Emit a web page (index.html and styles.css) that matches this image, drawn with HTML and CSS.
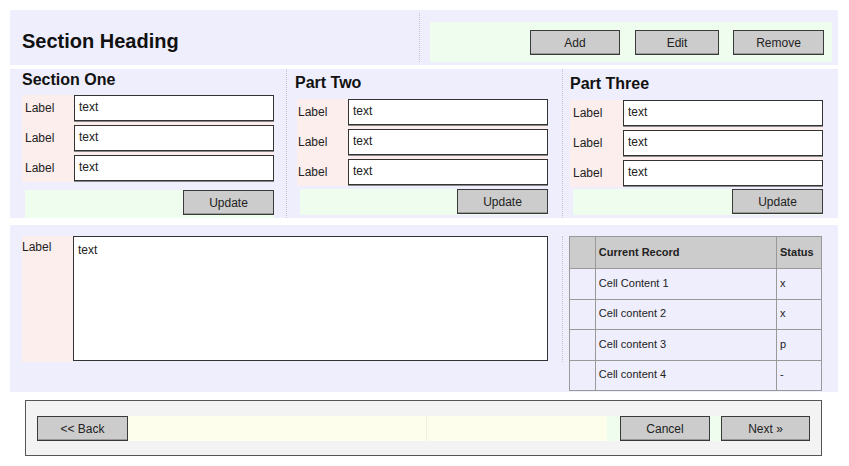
FILE: index.html
```html
<!DOCTYPE html>
<html>
<head>
<meta charset="utf-8">
<link rel="stylesheet" href="styles.css">
</head>
<body>
<div class="page">
  <div class="band top">
    <div class="top-left"><h1>Section Heading</h1></div>
    <div class="top-right">
      <div class="actions">
        <button class="btn btn-add">Add</button>
        <button class="btn btn-edit">Edit</button>
        <button class="btn">Remove</button>
      </div>
    </div>
  </div>

  <div class="band parts">
    <div class="part p1">
      <h2>Section One</h2>
      <div class="form">
        <div class="row"><span class="lbl">Label</span><span class="inp">text</span></div>
        <div class="row"><span class="lbl">Label</span><span class="inp">text</span></div>
        <div class="row"><span class="lbl">Label</span><span class="inp">text</span></div>
      </div>
      <div class="bar"><button class="btn">Update</button></div>
    </div>
    <div class="part p2">
      <h2>Part Two</h2>
      <div class="form">
        <div class="row"><span class="lbl">Label</span><span class="inp">text</span></div>
        <div class="row"><span class="lbl">Label</span><span class="inp">text</span></div>
        <div class="row"><span class="lbl">Label</span><span class="inp">text</span></div>
      </div>
      <div class="bar"><button class="btn">Update</button></div>
    </div>
    <div class="part p3">
      <h2>Part Three</h2>
      <div class="form">
        <div class="row"><span class="lbl">Label</span><span class="inp">text</span></div>
        <div class="row"><span class="lbl">Label</span><span class="inp">text</span></div>
        <div class="row"><span class="lbl">Label</span><span class="inp">text</span></div>
      </div>
      <div class="bar"><button class="btn">Update</button></div>
    </div>
  </div>

  <div class="band detail">
    <div class="memo">
      <span class="memo-lbl">Label</span>
      <div class="memo-box">text</div>
    </div>
    <div class="records">
      <table class="grid">
        <thead>
          <tr><th class="c0"></th><th class="c1">Current Record</th><th class="c2">Status</th></tr>
        </thead>
        <tbody>
          <tr><td></td><td>Cell Content 1</td><td>x</td></tr>
          <tr><td></td><td>Cell content 2</td><td>x</td></tr>
          <tr><td></td><td>Cell content 3</td><td>p</td></tr>
          <tr><td></td><td>Cell content 4</td><td>-</td></tr>
        </tbody>
      </table>
    </div>
  </div>

  <div class="footer">
    <button class="btn">&lt;&lt; Back</button>
    <div class="spacer"><div class="half first"></div><div class="half"></div></div>
    <div class="nav">
      <button class="btn">Cancel</button>
      <button class="btn btn-next">Next &raquo;</button>
    </div>
  </div>
</div>
</body>
</html>
```

FILE: styles.css
```css
* { box-sizing: border-box; }
body {
  margin: 0;
  background: #fff;
  font-family: "Liberation Sans", Arial, sans-serif;
  color: #222;
}
.page {
  padding: 10px 11px 0 10px;
  width: 849px;
}
.band {
  background: #eeeefc;
  display: flex;
}
.top {
  height: 55px;
  margin-bottom: 4px;
}
.top-left {
  width: 410px;
  display: flex;
  align-items: center;
  padding-left: 12px;
  border-right: 1px dotted #c4c4d4;
  margin: 3px 0;
}
h1 {
  margin: 0;
  font-size: 20px;
  font-weight: bold;
  color: #111;
  padding-top: 8px;
}
.top-right {
  flex: 1;
  padding: 12px 6px 3px 10px;
}
.actions {
  background: #effdef;
  height: 40px;
  display: flex;
  justify-content: flex-end;
  align-items: flex-start;
  padding: 8px 8px 0 0;
}
.actions .btn { width: 91px; }
.actions .btn-add { width: 90px; margin-right: 15px; }
.actions .btn-edit { width: 84px; margin-right: 14px; }
.btn {
  height: 25px;
  width: 91px;
  background: #cccccc;
  border: 1px solid #3a3a3a;
  border-radius: 0;
  font-family: "Liberation Sans", Arial, sans-serif;
  font-size: 12px;
  color: #222;
  padding: 0;
  box-shadow: inset 0 -1px 0 #999;
}

.parts {
  height: 149px;
  margin-bottom: 7px;
}
.part {
  width: 276px;
  display: flex;
  flex-direction: column;
}
.part h2 {
  margin: 0;
  font-size: 16px;
  line-height: 20px;
  font-weight: bold;
  color: #111;
}
.p1 { padding: 1px 12px 0 12px; }
.p1 h2 { margin-bottom: 5px; }
.p2 {
  padding: 4px 14px 0 10px;
  border-left: 1px dotted #c4c4d4;
}
.p2 h2 { margin-bottom: 6px; margin-left: -2px; }
.p3 {
  padding: 5px 15px 0 7px;
  border-left: 1px dotted #c4c4d4;
}
.p3 h2 { margin-bottom: 6px; }
.form {
  background: #fdeeee;
  display: flex;
  flex-direction: column;
  gap: 4px;
  padding-bottom: 1px;
}
.row {
  display: flex;
  height: 26px;
  align-items: stretch;
}
.lbl {
  width: 52px;
  font-size: 12px;
  padding: 6px 0 0 3px;
  color: #222;
}
.p2 .lbl { width: 51px; padding-left: 1px; }
.p3 .lbl { width: 53px; }
.inp {
  flex: 1;
  background: #fff;
  border: 1px solid #333;
  font-size: 12px;
  padding: 4px 0 0 4px;
  color: #222;
  box-shadow: 0 1px 0 #888;
}
.bar {
  margin-top: auto;
  margin-bottom: 3px;
  margin-left: 3px;
  height: 26px;
  background: #effdef;
  display: flex;
  justify-content: flex-end;
  align-items: flex-start;
}
.bar .btn { width: 91px; }
.p1 .bar { margin-bottom: 0; height: 28px; }

.detail {
  height: 167px;
  margin-bottom: 8px;
  padding: 11px 0 0 12px;
}
.memo {
  display: flex;
  width: 541px;
  height: 126px;
  padding-right: 14px;
  border-right: 1px dotted #c4c4d4;
}
.memo-lbl {
  width: 51px;
  background: #fdeeee;
  font-size: 12px;
  padding: 4px 0 0 0;
}
.memo-box {
  flex: 1;
  background: #fff;
  border: 1px solid #333;
  font-size: 12px;
  padding: 6px 0 0 4px;
  height: 125px;
}
.records {
  padding-left: 6px;
}
.grid {
  border-collapse: collapse;
  width: 253px;
  font-size: 11px;
  color: #222;
}
.grid th, .grid td {
  border: 1px solid #999;
  text-align: left;
  padding: 0 0 2px 3px;
}
.grid th {
  background: #cccccc;
  height: 32px;
  font-weight: bold;
}
.grid td { height: 30.5px; }
.grid .c0 { width: 26px; }
.grid .c1 { width: 182px; }
.grid .c2 { width: 45px; }

.footer {
  margin-left: 15px;
  width: 797px;
  height: 56px;
  background: #f3f3f3;
  border: 1px solid #555;
  display: flex;
  align-items: flex-start;
  padding: 15px 11px 0 11px;
}
.footer .btn { width: 91px; flex: none; }
.spacer {
  width: 479px;
  height: 25px;
  display: flex;
  flex: none;
  background: #fefeec;
}
.half { flex: 1; }
.half.first { flex: none; width: 299px; border-right: 1px solid #f0f0dc; }
.nav {
  flex: 1;
  height: 25px;
  background: #effdef;
  display: flex;
  padding-left: 13px;
  gap: 11px;
}
.nav .btn { width: 90px; }
.nav .btn-next { width: 89px; }
```
